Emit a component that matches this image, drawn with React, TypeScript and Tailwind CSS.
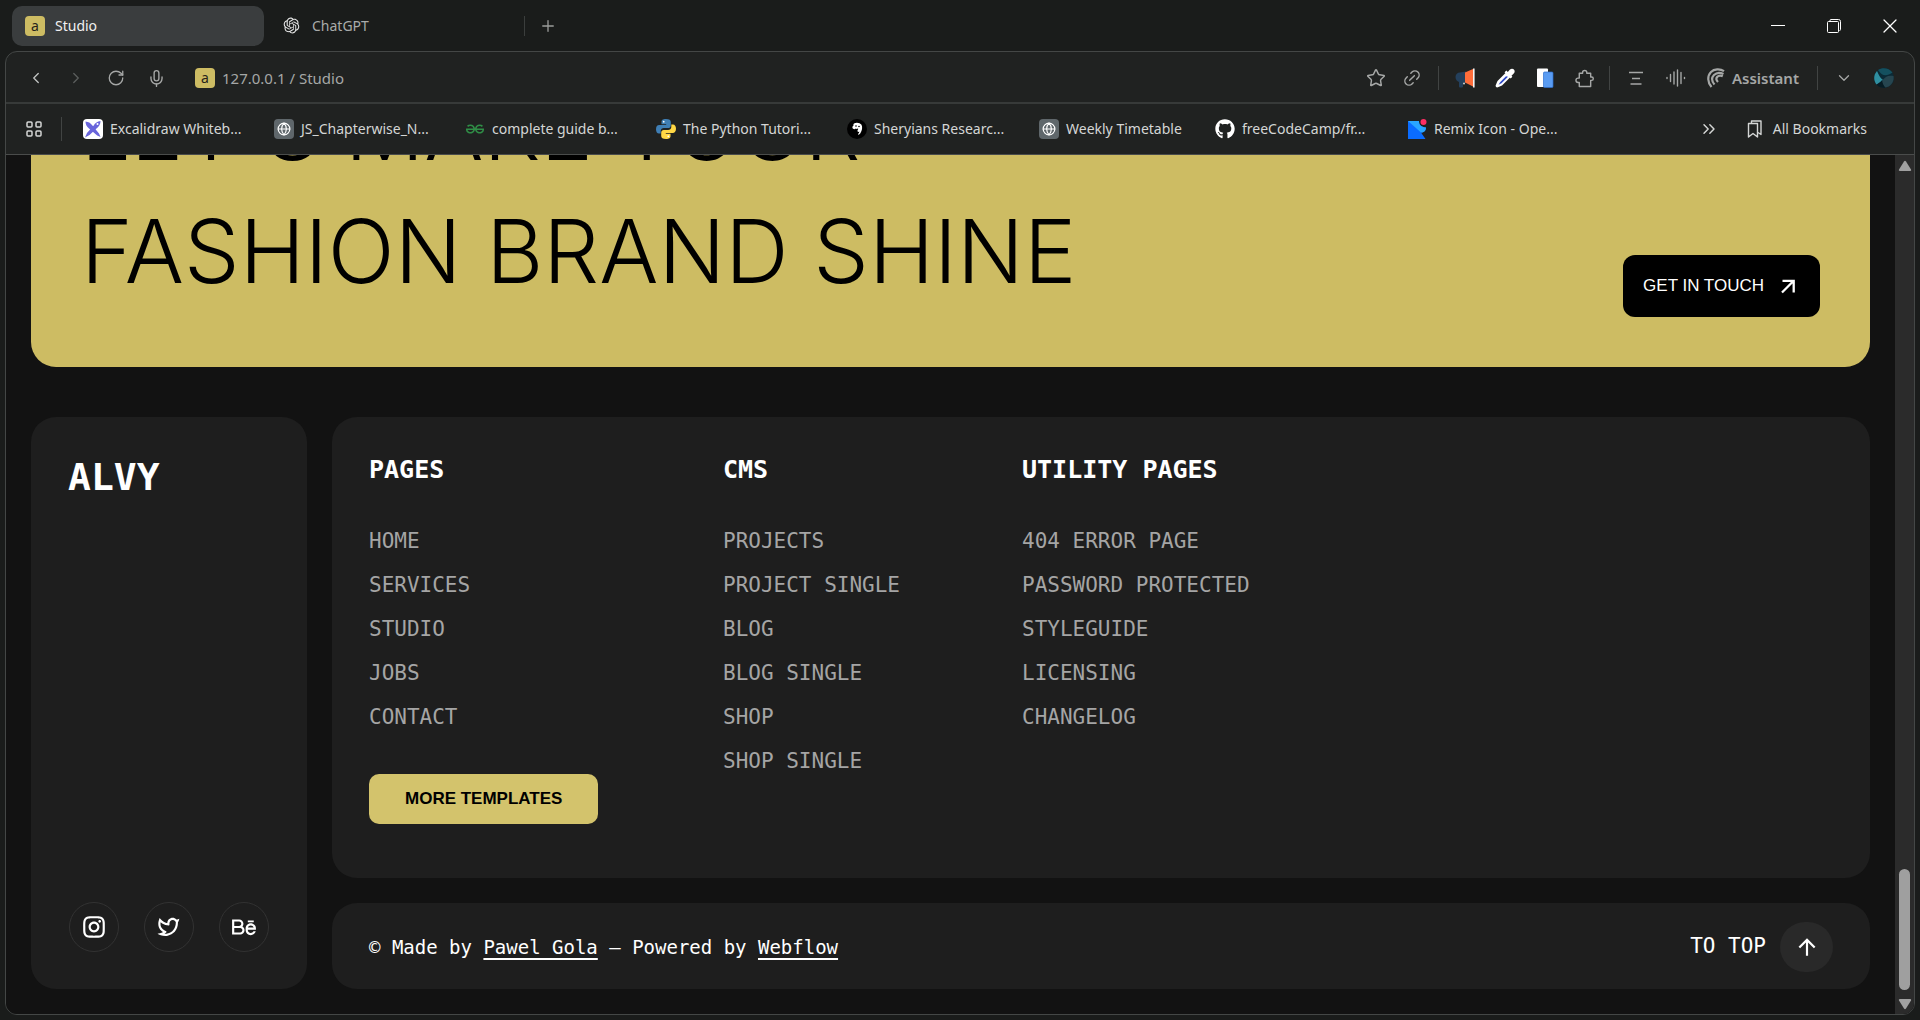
import type { ReactNode } from "react";
import {
  RiOpenaiFill,
  RiInstagramLine,
  RiTwitterLine,
  RiBehanceLine,
  RiArrowUpLine,
} from "react-icons/ri";
import { FaGithub } from "react-icons/fa";
import { SiGeeksforgeeks } from "react-icons/si";
import {
  ChevronDown,
  ChevronLeft,
  ChevronRight,
  ChevronsRight,
  Globe,
  Link2,
  Mic,
  Plus,
  RotateCw,
  Star,
  X,
} from "lucide-react";

const MONO = "font-['DejaVu_Sans_Mono',monospace]";

function SiteIcon() {
  return (
    <span className="flex size-5 shrink-0 items-center justify-center rounded-sm bg-[#cdbc63] font-['Noto_Sans',sans-serif] text-sm leading-none text-[#26241a]">
      a
    </span>
  );
}

function Divider() {
  return <span className="h-6 w-px shrink-0 bg-[#414443]" />;
}

function ToolButton({ label, children }: { label: string; children: ReactNode }) {
  return (
    <button type="button" aria-label={label} className="flex h-8 w-10 shrink-0 items-center justify-center">
      {children}
    </button>
  );
}

function TabStrip() {
  return (
    <header className="flex h-[51px] shrink-0 items-center pl-3 pr-0.5">
      <button
        type="button"
        className="flex h-10 w-[252px] items-center gap-2.5 rounded-[10px] bg-[#3a3d3e] px-[13px] text-sm text-[#f1f1f1]"
      >
        <SiteIcon />
        Studio
      </button>
      <button type="button" className="flex h-10 w-[260px] items-center gap-[11px] px-[18px] text-sm text-[#a9abaa]">
        <RiOpenaiFill className="size-[19px] text-[#e6e6e6]" />
        ChatGPT
      </button>
      <span className="h-5 w-px bg-[#3b3e3d]" />
      <button type="button" aria-label="New tab" className="flex h-10 w-[46px] items-center justify-center text-[#9a9c9b]">
        <Plus className="size-[18px]" strokeWidth={1.75} />
      </button>
      <div className="grow" />
      <button type="button" aria-label="Minimize" className="flex h-10 w-14 items-center justify-center">
        <span className="h-px w-3.5 bg-white" />
      </button>
      <button type="button" aria-label="Restore" className="flex h-10 w-14 items-center justify-center text-white">
        <svg className="size-3.5" viewBox="0 0 14 14" fill="none" stroke="currentColor">
          <rect x=".5" y="2.5" width="11" height="11" rx="1" />
          <path d="M3 2V1.500A1 1 0 0 1 4 .5h7.500a2 2 0 0 1 2 2V10.500a1 1 0 0 1-1 1" />
        </svg>
      </button>
      <button type="button" aria-label="Close" className="flex h-10 w-14 items-center justify-center text-white">
        <X className="size-6" strokeWidth={1.25} />
      </button>
    </header>
  );
}

function Toolbar() {
  return (
    <div className="flex h-[52px] shrink-0 items-center border-b-2 border-[#373a39] pl-[10px] pr-5 pt-0.5 text-[15px] text-[#a5a7a6]">
      <ToolButton label="Back">
        <ChevronLeft className="size-[18px] text-[#c3c5c4]" strokeWidth={1.75} />
      </ToolButton>
      <ToolButton label="Forward">
        <ChevronRight className="size-[18px] text-[#5b5e5d]" strokeWidth={1.75} />
      </ToolButton>
      <ToolButton label="Reload">
        <RotateCw className="size-[18px]" strokeWidth={1.75} />
      </ToolButton>
      <ToolButton label="Voice search">
        <Mic className="size-[19px]" strokeWidth={1.75} />
      </ToolButton>
      <button type="button" className="flex grow items-center gap-[7px] pl-[19px] text-left">
        <SiteIcon />
        127.0.0.1 / Studio
      </button>
      <div className="flex shrink-0 items-center">
        <button type="button" aria-label="Bookmark page" className="flex h-8 w-9 items-center justify-center">
          <Star className="size-5" strokeWidth={1.75} />
        </button>
        <button type="button" aria-label="Copy link" className="mr-2 flex h-8 w-9 items-center justify-center">
          <Link2 className="size-5 -rotate-45" strokeWidth={1.75} />
        </button>
        <Divider />
        <span className="w-1.5" />
        <ToolButton label="Announcements">
          <svg className="size-5" viewBox="0 0 20 20">
            <path d="M11 3.500v11.500L8 14.500v4a1 1 0 0 1-1 1H5a1 1 0 0 1-1-1v-4.500C2 13.500.5 11.500.5 9s2-4.500 4.500-4.500z" fill="#24405c" />
            <path d="M10 4.500 18 1v17.500L10 14.500z" fill="#ff6d3a" />
            <path d="M18 .5h1.600v19H18z" fill="#f4f4f4" />
            <circle cx="9" cy="15.500" r="1" fill="#cfd4d8" />
          </svg>
        </ToolButton>
        <ToolButton label="Colour picker">
          <svg className="size-5" viewBox="0 0 20 20">
            <path d="M11.500 4 2.500 13 .7 17.200c-.4 1.500.9 2.600 2.200 2.100L7 17.500 16 8.500z" fill="#fff" />
            <path d="m11 8.300-5.700 5.800-1.800 2.700 3-1.500 6.500-6.500z" fill="#2f49c8" />
            <path d="m9.500 4.300 6.200 6.200 1.700-1.700-.9-1 2-2c1.500-1.500 1.500-3.200.4-4.300s-2.800-1.100-4.200.3L12.800 4l-1.400-1.400z" fill="#fff" />
          </svg>
        </ToolButton>
        <ToolButton label="Copy pages">
          <svg className="size-5" viewBox="0 0 20 20">
            <rect x="2" y=".5" width="11" height="18.500" rx="1" fill="#fff" />
            <rect x="8.500" y="4" width="9.500" height="15.500" rx="1" fill="#5a9cf2" stroke="#2c6fd0" strokeWidth=".7" />
          </svg>
        </ToolButton>
        <ToolButton label="Extensions">
          <svg className="size-[19px]" viewBox="0 0 20 20" fill="none" stroke="currentColor" strokeWidth="1.500" strokeLinejoin="round">
            <path d="M4.500 4.500H8V3.700a2.200 2.200 0 0 1 4.400 0v.8h4.100v4h1a1.700 1.700 0 0 1 0 3.500h-1v6.500h-12v-4.300H3.300a2.300 2.300 0 0 1 0-4.600h1.200z" />
          </svg>
        </ToolButton>
        <span className="w-1" />
        <Divider />
        <span className="w-1.5" />
        <ToolButton label="Reader view">
          <svg className="size-[18px]" viewBox="0 0 18 18" stroke="currentColor" strokeWidth="1.600">
            <path d="M2 3.500h14M5 9.500h8M3.500 15h11" />
          </svg>
        </ToolButton>
        <ToolButton label="Listen">
          <svg className="size-5" viewBox="0 0 20 20" stroke="currentColor" strokeWidth="1.400" strokeLinecap="round">
            <path d="M1 9.500v1M4.500 6.500v7M8 4v12M11.500 2v16M15 4.500v11M18.500 9.500v1" />
          </svg>
        </ToolButton>
        <button type="button" className="ml-2.5 mr-[18px] flex items-center gap-1.5 font-semibold">
          <svg className="size-5" viewBox="0 0 20 20" fill="none" stroke="currentColor" strokeWidth="2.200">
            <path d="M5.500 19C1.500 14.500 1 8 5 4c3-3 9-3.500 13-.8" />
            <path d="M8.500 16.500C5.500 13 5.500 9.500 8 7c2.300-2.300 6-2.800 9.500-1" />
            <path d="M12 14c-2-2-2-3.800-.7-5.200 1.300-1.300 3.500-1.500 5.500-.5" />
          </svg>
          Assistant
        </button>
        <Divider />
        <span className="w-1.5" />
        <ToolButton label="More">
          <ChevronDown className="size-[18px]" strokeWidth={1.75} />
        </ToolButton>
        <button type="button" aria-label="Profile" className="ml-2.5">
          <svg className="size-5" viewBox="0 0 20 20">
            <circle cx="10" cy="10" r="10" fill="#0b2a36" />
            <path d="M3 3C-.5 7-.8 12 2.500 16.500L9 12C6 10 4.500 6 3 3z" fill="#2f8fa0" />
            <path d="M4 2c4 6 8 7 14.500 2.500C15-.5 8-1 4 2z" fill="#14505f" />
            <path d="M8 13c3-5 7-6 11.500-5 1 6-3 11-8 11.500C9 18 8 16 8 13z" fill="#26454f" />
            <path d="M2.500 16.500C5 15.500 7 14 8 12c.5 4 2 6 3.500 7.800-4 .2-7-1-9-3.300z" fill="#071c24" />
          </svg>
        </button>
      </div>
    </div>
  );
}

function GlobeTile() {
  return (
    <span className="flex size-5 items-center justify-center rounded bg-[#5f676b] text-white">
      <Globe className="size-3.5" strokeWidth={2} />
    </span>
  );
}

const bookmarks: { label: string; width: string; icon: ReactNode }[] = [
  {
    label: "Excalidraw Whiteb...",
    width: "w-[191px]",
    icon: (
      <svg className="size-5" viewBox="0 0 20 20">
        <rect width="20" height="20" rx="4" fill="#fff" />
        <path d="M2.500 2.500c3 .3 5 1.500 6.500 3.500l7 8.500 1.500 3.500-3.300-1.500L6 9.500C3.800 7.500 2.500 5.500 2.500 2.500z" fill="#6965db" />
        <path d="M17.500 2c-3 .3-5.500 2-6.800 4.500L4 14l-2 4.500 4.500-2.500 7-6.500C16 7.500 17.500 5 17.500 2z" fill="#6965db" />
        <circle cx="14.500" cy="5" r="1" fill="#fff" />
      </svg>
    ),
  },
  { label: "JS_Chapterwise_N...", width: "w-[191px]", icon: <GlobeTile /> },
  {
    label: "complete guide b...",
    width: "w-[191px]",
    icon: <SiGeeksforgeeks className="size-[18px] text-[#2f8d46]" />,
  },
  {
    label: "The Python Tutori...",
    width: "w-[191px]",
    icon: (
      <svg className="size-5" viewBox="0 0 20 20">
        <path d="M10 0C6.500 0 5.500 1.200 5.500 3v2.200h4.700v.8H3.300C1.200 6 0 7.500 0 10.200S1.200 14.500 3 14.500h1.700v-2.400c0-1.800 1.500-3 3.100-3h4.500c1.400 0 2.500-1.100 2.500-2.600V3C14.800 1 13.300 0 10 0z" fill="#3f7fb5" />
        <path d="M10 20c3.500 0 4.500-1.200 4.500-3v-2.200H9.800V14h6.900c2.100 0 3.300-1.500 3.300-4.200s-1.200-4.300-3-4.300h-1.700v2.400c0 1.800-1.500 3-3.100 3H7.700c-1.400 0-2.500 1.100-2.500 2.600V17c0 2 1.500 3 4.800 3z" fill="#ffd845" />
        <circle cx="7.700" cy="2.700" r=".9" fill="#fff" />
        <circle cx="12.300" cy="17.300" r=".9" fill="#fff" />
      </svg>
    ),
  },
  {
    label: "Sheryians Researc...",
    width: "w-48",
    icon: (
      <svg className="size-5" viewBox="0 0 20 20">
        <circle cx="10" cy="10" r="10" fill="#000" />
        <path d="M7 4.500c2-1.500 6-1 7.500 1.200 1.300 2.300.5 6-1 8.300-.8 1.300-2 2-2.500 1.500s1.500-1.500 1.300-3c-1 .8-2 .3-1.800-1 .2-1 1-1.300.5-2.300-.6.800-1.500 1-2.200.3-1 1-2.800.8-3.300-.5-.4-1.200.3-2 1-2.200-.3-1 0-1.800.5-2.300z" fill="#fff" />
        <circle cx="9" cy="7" r=".8" fill="#000" />
        <circle cx="12" cy="7.500" r=".8" fill="#000" />
      </svg>
    ),
  },
  { label: "Weekly Timetable", width: "w-44", icon: <GlobeTile /> },
  {
    label: "freeCodeCamp/fr...",
    width: "w-48",
    icon: <FaGithub className="size-5 text-white" />,
  },
  {
    label: "Remix Icon - Ope...",
    width: "w-[191px]",
    icon: (
      <svg className="size-5" viewBox="0 0 20 20">
        <path d="M1 2h11c0 4 2 6 7 6.500 0 3-2 5-5 5L18.500 20H1z" fill="#0a6cff" />
        <path d="M1 2h11c0 4 2 6 7 6.500 0 3-2 5-5 5L1 2z" fill="#29a6ff" />
        <circle cx="16.500" cy="3" r="3" fill="#ff2e63" />
      </svg>
    ),
  },
];

function BookmarksBar() {
  return (
    <nav
      aria-label="Bookmarks"
      className="flex h-[51px] shrink-0 items-center border-b border-[#4a4c4b] pl-2 pr-[47px] text-sm text-[#d4d6d5]"
    >
      <ToolButton label="Apps">
        <svg className="size-4" viewBox="0 0 16 16" fill="none" stroke="currentColor" strokeWidth="1.500">
          <rect x="1" y="1" width="5" height="5" rx="1" />
          <rect x="10" y="1" width="5" height="5" rx="1" />
          <rect x="1" y="10" width="5" height="5" rx="1" />
          <rect x="10" y="10" width="5" height="5" rx="1" />
        </svg>
      </ToolButton>
      <span className="w-[7px]" />
      <Divider />
      <ul className="flex grow items-center pl-[21px]">
        {bookmarks.map((b) => (
          <li key={b.label} className={b.width}>
            <a href="#" className="flex items-center gap-[7px] whitespace-nowrap">
              <span className="flex w-5 shrink-0 justify-center">{b.icon}</span>
              {b.label}
            </a>
          </li>
        ))}
      </ul>
      <button type="button" aria-label="More bookmarks" className="mr-7 flex h-8 items-center">
        <ChevronsRight className="size-5" strokeWidth={1.75} />
      </button>
      <button type="button" className="flex items-center gap-2.5">
        <svg className="h-[18px] w-4" viewBox="0 0 16 18" fill="none" stroke="currentColor" strokeWidth="1.400" strokeLinejoin="round">
          <path d="M1.500 3.500h9V17L6 13.500 1.500 17z" />
          <path d="M4.500 3.500V1H14v13.500l-3-2" />
        </svg>
        All Bookmarks
      </button>
    </nav>
  );
}

const columns = [
  {
    title: "PAGES",
    width: "w-[354px]",
    links: ["HOME", "SERVICES", "STUDIO", "JOBS", "CONTACT"],
    cta: "MORE TEMPLATES",
  },
  {
    title: "CMS",
    width: "w-[299px]",
    links: ["PROJECTS", "PROJECT SINGLE", "BLOG", "BLOG SINGLE", "SHOP", "SHOP SINGLE"],
  },
  {
    title: "UTILITY PAGES",
    width: "grow",
    links: ["404 ERROR PAGE", "PASSWORD PROTECTED", "STYLEGUIDE", "LICENSING", "CHANGELOG"],
  },
];

const socials = [
  { label: "Instagram", icon: <RiInstagramLine className="size-[26px]" /> },
  { label: "Twitter", icon: <RiTwitterLine className="size-[26px]" /> },
  { label: "Behance", icon: <RiBehanceLine className="size-[26px]" /> },
];

function CallToAction() {
  return (
    <section className="flex items-end justify-between rounded-[25px] bg-[#cdbc63] px-[50px] pb-[50px] pt-12 text-black">
      <h1 className="pb-1 font-['Inter',sans-serif] text-[88px] font-light leading-[123px]">
        LET'S MAKE YOUR
        <br />
        FASHION BRAND SHINE
      </h1>
      <a
        href="#"
        className="flex h-[62px] shrink-0 items-center gap-3 rounded-xl bg-black px-5 font-['Liberation_Sans',Arial,sans-serif] text-[17px] text-white"
      >
        GET IN TOUCH
        <svg className="size-6" viewBox="0 0 24 24" fill="none" stroke="currentColor" strokeWidth="2.300">
          <path d="M6.500 6.800h11.200V18.500M17.200 7.300 6 18.500" />
        </svg>
      </a>
    </section>
  );
}

function Footer() {
  return (
    <footer className={`mt-[50px] flex gap-[25px] text-white ${MONO}`}>
      <section className="flex w-[276px] shrink-0 flex-col justify-between rounded-[25px] bg-[#1e1e1e] p-[37px]">
        <h2 className="text-[38px] font-bold leading-[46px]">ALVY</h2>
        <ul className="flex justify-center gap-[25px]">
          {socials.map((s) => (
            <li key={s.label}>
              <a
                href="#"
                aria-label={s.label}
                className="flex size-[50px] items-center justify-center rounded-full border border-[#323232]"
              >
                {s.icon}
              </a>
            </li>
          ))}
        </ul>
      </section>
      <div className="flex grow flex-col gap-[25px]">
        <section className="flex h-[461px] rounded-[25px] bg-[#1e1e1e] px-[37px] pt-[37px]">
          {columns.map((c) => (
            <div key={c.title} className={c.width}>
              <h3 className="text-[25px] font-bold leading-8">{c.title}</h3>
              <ul className="mt-[33px] text-[21px] leading-[44px] text-[#a5a5a5]">
                {c.links.map((l) => (
                  <li key={l}>
                    <a href="#">{l}</a>
                  </li>
                ))}
              </ul>
              {c.cta && (
                <button
                  type="button"
                  className="mt-[35px] h-[50px] rounded-[10px] bg-[#d3c36c] px-9 font-['Liberation_Sans',Arial,sans-serif] text-[17px] font-bold text-black"
                >
                  {c.cta}
                </button>
              )}
            </div>
          ))}
        </section>
        <section className="flex h-[86px] items-center justify-between rounded-[25px] bg-[#1e1e1e] px-[37px] pt-0.5 text-[19px]">
          <p>
            © Made by{" "}
            <a href="#" className="underline decoration-2 underline-offset-4">
              Pawel Gola
            </a>{" "}
            – Powered by{" "}
            <a href="#" className="underline decoration-2 underline-offset-4">
              Webflow
            </a>
          </p>
          <a href="#" className="flex items-center gap-3.5 text-[21px]">
            TO TOP
            <span className="flex h-[50px] w-[53px] items-center justify-center rounded-full bg-[#292929]">
              <RiArrowUpLine className="size-[26px]" />
            </span>
          </a>
        </section>
      </div>
    </footer>
  );
}

function Scrollbar() {
  return (
    <div aria-hidden="true" className="flex w-[19px] shrink-0 flex-col items-center justify-between bg-[#2b2b2b] pb-1 pt-[5px]">
      <svg className="h-3 w-3.5" viewBox="0 0 14 12" fill="#a0a0a0">
        <path d="M6 1.500a1.200 1.200 0 0 1 2 0l5 8q.6 1.500-1 1.500H2q-1.600 0-1-1.500z" />
      </svg>
      <div className="flex flex-col items-center gap-2">
        <span className="h-[121px] w-[11px] rounded-full bg-[#9f9f9f]" />
        <svg className="h-3 w-3.5 rotate-180" viewBox="0 0 14 12" fill="#a0a0a0">
          <path d="M6 1.500a1.200 1.200 0 0 1 2 0l5 8q.6 1.500-1 1.500H2q-1.600 0-1-1.500z" />
        </svg>
      </div>
    </div>
  );
}

export default function App() {
  return (
    <div className="flex h-screen flex-col overflow-hidden bg-[#1a1c1b] px-[5px] pb-[5px] font-['Noto_Sans',sans-serif]">
      <div className="-mx-[5px]">
        <TabStrip />
      </div>
      <div className="flex min-h-0 grow flex-col overflow-hidden rounded-xl border border-[#444746] bg-[#202221]">
        <Toolbar />
        <BookmarksBar />
        <div className="flex min-h-0 grow bg-[#121212]">
          <main className="flex min-w-0 grow flex-col justify-end overflow-hidden px-[25px] pb-[25px]">
            <CallToAction />
            <Footer />
          </main>
          <Scrollbar />
        </div>
      </div>
    </div>
  );
}
